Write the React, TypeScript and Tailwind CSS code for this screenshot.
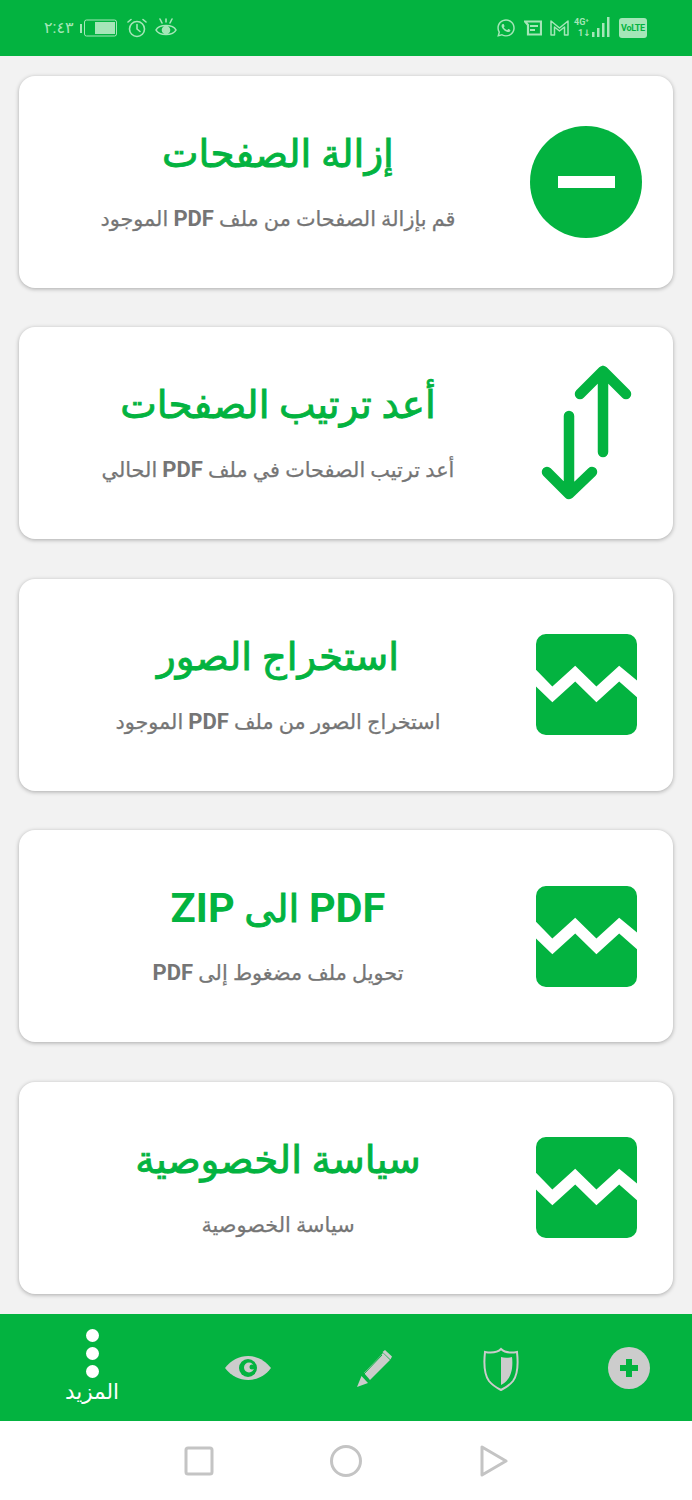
import React from "react";
import { FaWhatsapp } from "react-icons/fa";

const font = "font-['Roboto','DejaVu_Sans',sans-serif]";

const Tear = () => (
  <svg width="101" height="101" viewBox="0 0 102 102" className="shrink-0 ml-[1px]">
    <path d="M10 0H92A10 10 0 0 1 102 10V47L84 32L61 53L39.6 32L16.5 53L0 36V10A10 10 0 0 1 10 0Z" fill="#03b340" />
    <path d="M0 53L16.5 69L39.6 48L61 69L84 48L102 64V92A10 10 0 0 1 92 102H10A10 10 0 0 1 0 92Z" fill="#03b340" />
  </svg>
);

const Minus = () => (
  <svg width="112" height="112" viewBox="0 0 112 112" className="shrink-0">
    <circle cx="56" cy="56" r="56" fill="#03b340" />
    <rect x="28" y="50" width="57" height="12" fill="#fff" />
  </svg>
);

const Arrows = () => (
  <svg width="100" height="140" viewBox="0 0 100 140" fill="none" stroke="#03b340" strokeWidth="10.5" strokeLinecap="round" strokeLinejoin="round" className="shrink-0">
    <path d="M67 89V8M44 31L67 8L90 31" />
    <path d="M33 53V130M11 109L33 131L56 109" />
  </svg>
);

const L = ({ c, children }: { c: string; children: React.ReactNode }) => (
  <span className={c}>{children}</span>
);

const titleLatin = "text-[41.5px] font-bold [-webkit-text-stroke:0]";
const subLatin = "text-[22px] font-bold [-webkit-text-stroke:0]";

const cards = [
  { t: <>إزالة الصفحات</>, s: <>قم بإزالة الصفحات من ملف <L c={subLatin}>PDF</L> الموجود</>, i: <Minus /> },
  { t: <>أعد ترتيب الصفحات</>, s: <>أعد ترتيب الصفحات في ملف <L c={subLatin}>PDF</L> الحالي</>, i: <Arrows /> },
  { t: <>استخراج الصور</>, s: <>استخراج الصور من ملف <L c={subLatin}>PDF</L> الموجود</>, i: <Tear /> },
  { t: <><L c={titleLatin}>PDF</L> الى <L c={titleLatin}>ZIP</L></>, s: <>تحويل ملف مضغوط إلى <L c={subLatin}>PDF</L></>, i: <Tear /> },
  { t: <>سياسة الخصوصية</>, s: <>سياسة الخصوصية</>, i: <Tear /> },
];

const Card = ({ t, s, i }: { t: React.ReactNode; s: React.ReactNode; i: React.ReactNode }) => (
  <div className="h-[212px] rounded-2xl bg-white shadow-[0_1px_4px_rgba(0,0,0,0.3)] flex items-center">
    <div className="w-[518px] flex flex-col items-center">
      <div dir="rtl" className="h-[44px] text-[38.8px] leading-[44px] font-normal text-[#03b340] [-webkit-text-stroke:0.9px_#03b340]">{t}</div>
      <div dir="rtl" className="mt-[30px] h-[26px] text-[20.8px] leading-[26px] font-normal text-[#757575] [-webkit-text-stroke:0.25px_#757575]">{s}</div>
    </div>
    <div className="w-[136px] pr-[38px] flex items-center justify-center">{i}</div>
  </div>
);

const StatusBar = () => (
  <div className="h-[56px] bg-[#03b340] flex items-center justify-between pl-[44px] pr-[45px] text-[#a5e6b8] shrink-0">
    <div className="flex items-center gap-[8px]">
      <span className="text-[16px] leading-none tracking-[1px]">٢:٤٣</span>
      <svg width="37" height="18" viewBox="0 0 37 18" className="-ml-[2px]">
        <rect x="0" y="5" width="2" height="9" fill="currentColor" />
        <rect x="4.5" y="1" width="32" height="16" rx="2" fill="none" stroke="currentColor" />
        <rect x="15" y="3" width="20" height="12" fill="currentColor" />
      </svg>
      <svg width="20" height="20" viewBox="0 0 20 20" fill="none" stroke="currentColor" strokeWidth="1.6" strokeLinecap="round" className="ml-[2px]">
        <circle cx="10" cy="11" r="7.5" />
        <path d="M10 6.5V11L13 13.5M1 4L4 1.5M19 4L16 1.5" />
      </svg>
      <svg width="22" height="20" viewBox="0 0 22 20" fill="none" stroke="currentColor" strokeWidth="1.6" strokeLinecap="round">
        <path d="M1 12C4 6 18 6 21 12C18 18 4 18 1 12Z" />
        <circle cx="11" cy="12" r="3.5" fill="currentColor" />
        <path d="M5 1L7 5M17 1L15 5M11 1V4" />
      </svg>
    </div>
    <div className="flex items-center gap-[8px]">
      <FaWhatsapp className="w-[20px] h-[20px]" />
      <svg width="18" height="16" viewBox="0 0 18 16" fill="none" stroke="currentColor" strokeWidth="2.2">
        <path d="M1 1.5H17V14.5H4V5L1 1.5Z" />
        <path d="M6 6H14M6 10H11" strokeWidth="2" />
      </svg>
      <svg width="19" height="16" viewBox="0 0 19 16" fill="none" stroke="currentColor" strokeWidth="1.5" strokeLinejoin="round">
        <path d="M1 15V1L9.5 8L18 1V15H14.5V7L9.5 11L4.5 7V15Z" />
      </svg>
      <div className="relative w-[37px] h-[22px] -ml-[3px]">
        <span className="absolute left-0 top-0 text-[9px] leading-[10px] font-bold">4G⁺</span>
        <span className="absolute left-[4px] top-[12px] text-[9px] leading-[9px] font-bold">1↓</span>
        <svg width="20" height="20" viewBox="0 0 20 20" className="absolute right-0 top-0" fill="currentColor">
          <rect x="1" y="15" width="2.5" height="5" />
          <rect x="6" y="11" width="2.5" height="9" />
          <rect x="11" y="6" width="2.5" height="14" />
          <rect x="16" y="0" width="2.5" height="20" />
        </svg>
      </div>
      <span className="w-[28px] h-[20px] rounded-[3px] bg-[#a5e6b8] text-[#03b340] text-[9px] leading-[20px] font-bold text-center tracking-[-0.3px]">VoLTE</span>
    </div>
  </div>
);

const BottomNav = () => (
  <div className="h-[107px] bg-[#03b340] grid grid-cols-5 shrink-0">
    <div className="flex flex-col items-center pt-[15px] w-[184px]">
      <div className="flex flex-col gap-[5px]">
        <div className="w-[13px] h-[13px] rounded-full bg-white" />
        <div className="w-[13px] h-[13px] rounded-full bg-white" />
        <div className="w-[13px] h-[13px] rounded-full bg-white" />
      </div>
      <div dir="rtl" className="text-white text-[21.5px] leading-[26px] mt-[1px]">المزيد</div>
    </div>
    <div className="flex justify-center pt-[42px] pl-[80px]">
      <svg width="46" height="24" viewBox="0 0 46 24" className="shrink-0">
        <path d="M0 12C12 -4 34 -4 46 12C34 28 12 28 0 12Z" fill="#cccccc" />
        <circle cx="23" cy="12" r="9" fill="#03b340" />
        <circle cx="24" cy="11.5" r="5" fill="#cccccc" />
        <circle cx="27" cy="11" r="2.5" fill="#03b340" />
      </svg>
    </div>
    <div className="flex justify-center pt-[36px] pl-[58px]">
      <svg width="38" height="38" viewBox="0 0 38 38" className="shrink-0">
        <path d="M8 23L27 3L34 10L14 30Z" fill="#cccccc" />
        <path d="M26.5 2L29 0L36 6.5L34.5 9.5Z" fill="#cccccc" />
        <path d="M5.5 26L12 33L1 37Z" fill="#cccccc" />
        <path d="M7 25L26 5" stroke="#03b340" strokeWidth="1" />
      </svg>
    </div>
    <div className="flex justify-center pt-[33px] pl-[33px]">
      <svg width="36" height="44" viewBox="0 0 36 44" fill="none" className="shrink-0">
        <path d="M18 2C14 6 8 6 2 5C1 14 0 26 6 34C10 39 14 41 18 43C22 41 26 39 30 34C36 26 35 14 34 5C28 6 22 6 18 2Z" stroke="#cccccc" strokeWidth="2" />
        <path d="M18 10C21 11 25 11 29 10C30 18 29 27 25 32C23 35 21 36 18 38Z" fill="#cccccc" />
      </svg>
    </div>
    <div className="flex justify-center pt-[33px] pl-[12px]">
      <svg width="42" height="42" viewBox="0 0 42 42" className="shrink-0">
        <circle cx="21" cy="21" r="21" fill="#cccccc" />
        <path d="M21 12V30M12 21H30" stroke="#03b340" strokeWidth="6" />
      </svg>
    </div>
  </div>
);

const SysNav = () => (
  <div className="h-[79px] bg-white flex items-start justify-center gap-[116px] pt-[25px] pr-[1px] shrink-0">
    <svg width="30" height="30" viewBox="0 0 30 30" fill="none" stroke="#c4c4c4" strokeWidth="3">
      <rect x="2" y="2" width="26" height="26" rx="2" />
    </svg>
    <svg width="32" height="32" viewBox="0 0 32 32" fill="none" stroke="#c4c4c4" strokeWidth="3" className="-mt-[1px]">
      <circle cx="16" cy="16" r="14.5" />
    </svg>
    <svg width="28" height="32" viewBox="0 0 28 32" fill="none" stroke="#c4c4c4" strokeWidth="3" strokeLinejoin="round" className="-mt-[1px] ml-[2px]">
      <path d="M2 2V30L26 16Z" />
    </svg>
  </div>
);

export default function App() {
  return (
    <div className={`w-[692px] h-[1500px] bg-[#f2f2f2] flex flex-col overflow-hidden ${font}`}>
      <StatusBar />
      <div className="flex-1 px-[19px] pt-[20px] flex flex-col gap-[39.4px]">
        {cards.map((c, n) => (
          <Card key={n} {...c} />
        ))}
      </div>
      <BottomNav />
      <SysNav />
    </div>
  );
}
